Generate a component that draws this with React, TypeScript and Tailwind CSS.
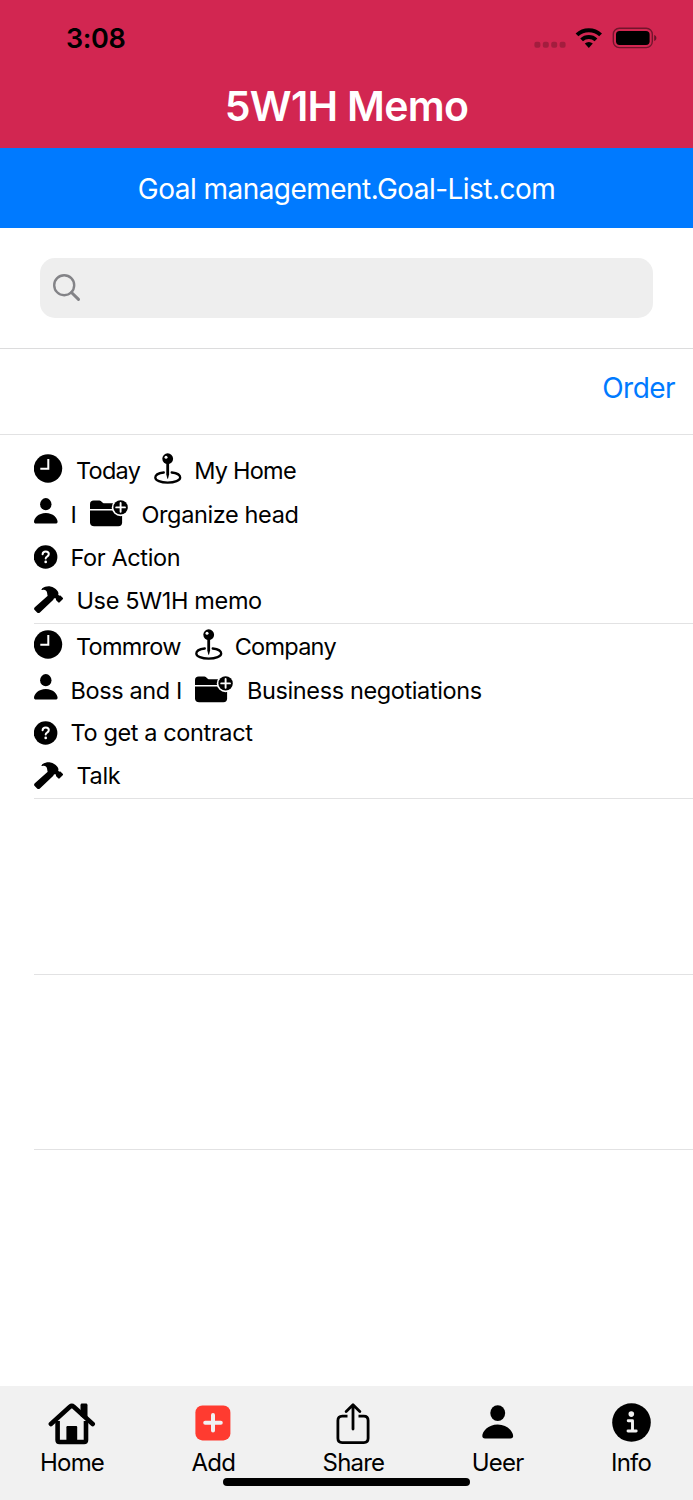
import type { ReactNode } from 'react';

interface Memo {
  when: string;
  where: string;
  who: string;
  what: string;
  why: string;
  how: string;
}

const memos: Memo[] = [
  {
    when: 'Today',
    where: 'My Home',
    who: 'I',
    what: 'Organize head',
    why: 'For Action',
    how: 'Use 5W1H memo',
  },
  {
    when: 'Tommrow',
    where: 'Company',
    who: 'Boss and I',
    what: 'Business negotiations',
    why: 'To get a contract',
    how: 'Talk',
  },
];

function ClockIcon() {
  return (
    <svg className="h-[30px] w-[29px] shrink-0" viewBox="0 0 29 30">
      <circle cx="14" cy="14.5" r="14.2" />
      <path d="M14.3 5v9.8H6.3" fill="none" stroke="#fff" strokeWidth="2" />
    </svg>
  );
}

function PinIcon() {
  return (
    <svg className="h-[32px] w-[28px] shrink-0" viewBox="0 0 28 32">
      <path
        d="M9.8 19.5C4.8 20.1 1.3 22 1.3 24.5c0 3 5.4 5.1 12.4 5.1s12.5-2.1 12.5-5.1c0-2.5-3.5-4.4-8.5-5"
        fill="none"
        stroke="#000"
        strokeWidth="2.3"
        strokeLinecap="round"
      />
      <path d="M12.3 9h2.8v12.5l-1.1 4.3h-.6l-1.1-4.3z" />
      <circle cx="13.7" cy="5.7" r="5.4" />
      <circle cx="12" cy="4.2" r="1.5" fill="#fff" />
    </svg>
  );
}

function PersonIcon({ className }: { className: string }) {
  return (
    <svg className={className} viewBox="0 0 24 26">
      <ellipse cx="11.8" cy="6.2" rx="5.7" ry="6.1" />
      <path d="M2.1 25.6C.7 25.6 0 25 0 23.8c0-3.6 4.4-8.9 11.8-8.9s11.8 5.3 11.8 8.9c0 1.2-.7 1.8-2.1 1.8z" />
    </svg>
  );
}

function FolderPlusIcon() {
  return (
    <svg className="h-[27px] w-[39px] shrink-0" viewBox="0 0 39 27">
      <path d="M0 9V4.2C0 1.8 1.3.6 3.7.6h4.8c1.4 0 2.1.3 3.1 1.1l.9.7c.8.6 1.4.8 2.5.8h13.4c2.4 0 3.7 1.2 3.7 3.6V9z" />
      <path d="M0 10.5h32.1v12.1c0 2.4-1.3 3.7-3.7 3.7H4.2C1.5 26.3 0 25 0 22.3z" />
      <circle cx="30.6" cy="7.4" r="8.8" fill="#fff" />
      <circle cx="30.6" cy="7.4" r="7.2" />
      <path d="M30.6 3v8.8M26.2 7.4H35" stroke="#fff" strokeWidth="1.9" strokeLinecap="round" />
    </svg>
  );
}

function QuestionIcon() {
  return (
    <svg className="h-[24px] w-[24px] shrink-0" viewBox="0 0 24 24">
      <circle cx="11.6" cy="12" r="11.8" />
      <path
        d="M8.6 9.3c.1-1.7 1.3-2.7 3.1-2.7 1.8 0 3.1 1 3.1 2.5 0 1.1-.5 1.8-1.6 2.4-1.1.7-1.5 1.1-1.5 2.1"
        fill="none"
        stroke="#fff"
        strokeWidth="2"
        strokeLinecap="round"
      />
      <circle cx="11.7" cy="16.9" r="1.35" fill="#fff" />
    </svg>
  );
}

function HammerIcon() {
  return (
    <svg className="h-[28px] w-[30px] shrink-0" viewBox="0 0 30 28">
      <path d="M14.6 9l5 4.6L5.9 26.4c-.9.9-1.9.9-2.8 0L.7 24c-.9-.9-.8-1.9.1-2.7z" />
      <path d="M8 2.5C10.6.6 13.5-.1 16.4.4c2.8.5 5 2 6.7 4 1.3 1.5 1.6 2.6 1.1 4.3l1.1 1c.6-.3 1.1-.2 1.6.3l1.8 1.8c.5.5.5 1 0 1.5l-3 3c-.5.5-1 .5-1.5 0l-1.8-1.8c-.5-.5-.6-1-.3-1.6l-1-.9c-.7.3-1.2.6-1.7 1.1l-.9.9-5-4.6c-.4-2-.2-3.4-1.6-4.9-1.1-.8-2-.9-3.6-.5-.9.2-1.3-.5-.3-1z" />
    </svg>
  );
}

function HomeIcon() {
  return (
    <svg className="h-[42px] w-[48px]" viewBox="0 0 48 42">
      <path d="M32.5 13V2.2c0-1 .6-1.6 1.6-1.6h3.8c1 0 1.6.6 1.6 1.6V18z" />
      <path
        d="M2.9 21L21.9 3.8c1.3-1.1 2.5-1.1 3.8 0L44.7 21"
        fill="none"
        stroke="#000"
        strokeWidth="4.6"
        strokeLinecap="round"
        strokeLinejoin="round"
      />
      <path
        d="M9.6 18v19.1c0 1.3.7 1.9 1.9 1.9h24.6c1.2 0 1.9-.6 1.9-1.9V18"
        fill="none"
        stroke="#000"
        strokeWidth="4.6"
      />
      <path d="M18.4 38V24.3c0-.8.5-1.3 1.3-1.3h8.2c.8 0 1.3.5 1.3 1.3V38z" />
    </svg>
  );
}

function AddIcon() {
  return (
    <svg className="h-[42px] w-[36px]" viewBox="0 0 36 42">
      <rect x=".4" y="2.4" width="35" height="35" rx="7" fill="#ff3b30" />
      <path d="M18 12v15.6M10.2 19.8h15.6" stroke="#f1f1f1" strokeWidth="4" strokeLinecap="round" />
    </svg>
  );
}

function ShareIcon() {
  return (
    <svg className="h-[42px] w-[34px]" viewBox="0 0 34 42">
      <g fill="none" stroke="#000" strokeWidth="2.8" strokeLinejoin="round">
        <path d="M11.5 13.2H6.2c-2.8 0-4.3 1.5-4.3 4.3v17.8c0 2.8 1.5 4.3 4.3 4.3h21.6c2.8 0 4.3-1.5 4.3-4.3V17.5c0-2.8-1.5-4.3-4.3-4.3h-5.3" />
        <path d="M17 26V2.2M10.2 8.4L17 1.8l6.8 6.6" strokeLinecap="round" />
      </g>
    </svg>
  );
}

function InfoIcon() {
  return (
    <svg className="h-[42px] w-[39px]" viewBox="0 0 39 42">
      <circle cx="19.5" cy="19.5" r="19.3" />
      <circle cx="19.3" cy="11.1" r="2.8" fill="#f1f1f1" />
      <path
        d="M16.2 17.7h4.3v10M16 28h8.2"
        fill="none"
        stroke="#f1f1f1"
        strokeWidth="2.9"
        strokeLinecap="round"
        strokeLinejoin="round"
      />
    </svg>
  );
}

function StatusBar() {
  return (
    <div className="flex h-[76px] items-center justify-between pl-[66px] pr-[36px]">
      <span className="text-[27px] font-semibold leading-none tracking-[-0.4px]">3:08</span>
      <svg className="h-[24px] w-[124px]" viewBox="0 0 124 24">
        <g fill="#000" opacity=".22">
          <rect x="1.4" y="15.8" width="6" height="6" rx="2" />
          <rect x="9.8" y="15.8" width="6" height="6" rx="2" />
          <rect x="18.2" y="15.8" width="6" height="6" rx="2" />
          <rect x="26.6" y="15.8" width="6" height="6" rx="2" />
        </g>
        <g fill="none" stroke="#000" strokeWidth="4">
          <path d="M44 8.9a17 17 0 0 1 23.6 0" />
          <path d="M48.6 13.9a10.5 10.5 0 0 1 14.4 0" />
        </g>
        <path d="M55.8 21.9l-4-4.3a5.8 5.8 0 0 1 8 0z" />
        <rect x="80.3" y="2.3" width="39" height="19.3" rx="6" fill="none" stroke="#000" strokeWidth="1.4" opacity=".45" />
        <rect x="83" y="5.1" width="33.6" height="13.8" rx="3.6" />
        <path d="M121.2 9c1.5.6 2.2 1.6 2.2 3s-.7 2.4-2.2 3z" opacity=".5" />
      </svg>
    </div>
  );
}

function MemoRow({ memo }: { memo: Memo }) {
  return (
    <li className="ml-[34px] h-[175.5px] border-b border-[#e2e2e3] pt-[6px] text-[23.5px] leading-[30px] tracking-[-0.38px]">
      <div className="flex h-[32px] items-start tracking-[-0.75px]">
        <ClockIcon />
        <span className="ml-[13px] mt-[2px]">{memo.when}</span>
        <span className="-mt-[1px] ml-[14px] flex">
          <PinIcon />
        </span>
        <span className="ml-[12px] mt-[2px]">{memo.where}</span>
      </div>
      <div className="mt-[12px] flex h-[30px] items-start">
        <PersonIcon className="h-[26px] w-[24px] shrink-0" />
        <span className="ml-[12.5px] mt-[2px]">{memo.who}</span>
        <span className="ml-[13.5px] mt-[2px] flex">
          <FolderPlusIcon />
        </span>
        <span className="ml-[12.5px] mt-[2px]">{memo.what}</span>
      </div>
      <div className="mt-[16px] flex h-[26px] items-center">
        <QuestionIcon />
        <span className="ml-[12.5px] pt-px">{memo.why}</span>
      </div>
      <div className="mt-[16px] flex h-[28px] items-center">
        <HammerIcon />
        <span className="ml-[12.5px] pt-px">{memo.how}</span>
      </div>
    </li>
  );
}

function Tab({ label, children }: { label: string; children: ReactNode }) {
  return (
    <button className="flex flex-col items-center pt-[17px]">
      {children}
      <span className="mt-[2px] text-[24px] leading-[31px] tracking-[-0.8px]">{label}</span>
    </button>
  );
}

export default function App() {
  return (
    <div className="flex h-[1500px] w-[693px] flex-col overflow-hidden bg-white font-['Inter',sans-serif] text-black">
      <header className="h-[148px] bg-[#d22651]">
        <StatusBar />
        <h1 className="text-center text-[41px] font-semibold leading-[60px] tracking-[-0.7px] text-white">5W1H Memo</h1>
      </header>

      <div className="h-[80px] bg-[#007aff] text-center text-[28px] leading-[82px] tracking-[-0.54px] text-white">
        Goal management.Goal-List.com
      </div>

      <div className="h-[121px] border-b border-[#dcdcdd] px-[40px] pt-[30px]">
        <div className="flex h-[60px] items-center rounded-[15px] bg-[#eeeeee] pl-[13px]">
          <svg className="h-[28px] w-[28px]" viewBox="0 0 28 28" fill="none" stroke="#838387">
            <circle cx="11.2" cy="11.2" r="10" strokeWidth="2.4" />
            <path d="M18.5 18.5l7 6.9" strokeWidth="3" strokeLinecap="round" />
          </svg>
        </div>
      </div>

      <div className="flex h-[86px] justify-end border-b border-[#e2e2e3] pr-[18px]">
        <button className="h-[78px] text-[28px] tracking-[-0.55px] text-[#007aff]">Order</button>
      </div>

      <ul className="flex-1 pt-[13px]">
        {memos.map((memo) => (
          <MemoRow key={memo.when} memo={memo} />
        ))}
        <li className="ml-[34px] h-[175.5px] border-b border-[#e2e2e3]" />
        <li className="ml-[34px] h-[175.5px] border-b border-[#e2e2e3]" />
      </ul>

      <nav className="relative flex h-[114px] justify-between bg-[#f1f1f1] pl-[40px] pr-[42px]">
        <Tab label="Home">
          <HomeIcon />
        </Tab>
        <Tab label="Add">
          <AddIcon />
        </Tab>
        <Tab label="Share">
          <ShareIcon />
        </Tab>
        <Tab label="Ueer">
          <span className="flex h-[42px] pt-[2px]">
            <PersonIcon className="h-[34px] w-[32px]" />
          </span>
        </Tab>
        <Tab label="Info">
          <InfoIcon />
        </Tab>
        <div className="absolute bottom-[14px] left-[223px] h-[8px] w-[247px] rounded-full bg-black" />
      </nav>
    </div>
  );
}
